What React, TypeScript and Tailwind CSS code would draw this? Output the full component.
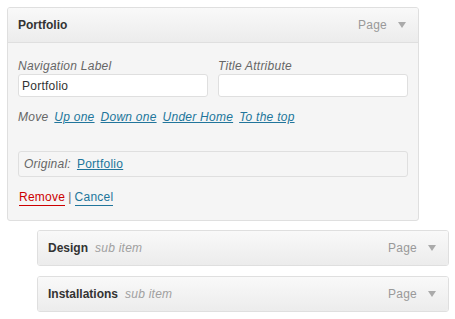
import React from 'react';

// -----------------------------------------------------------------------------
// Pieces
// -----------------------------------------------------------------------------

const Arrow: React.FC = () => (
  <svg width="8" height="6" viewBox="0 0 8 6" className="ml-[11px] shrink-0">
    <polygon points="0,0 8,0 4,6" fill="#aaaaaa" />
  </svg>
);

type HandleProps = {
  title: string;
  sub?: string;
  open?: boolean;
};

const ItemHandle: React.FC<HandleProps> = ({ title, sub, open }) => (
  <div
    className={
      open
        ? 'flex h-[35px] items-center border-b border-[#dfdfdf] bg-gradient-to-b from-[#f9f9f9] to-[#ececec] pl-[10px] pr-[12px]'
        : 'flex h-[34px] items-center bg-gradient-to-b from-[#f9f9f9] to-[#ececec] pl-[10px] pr-[12px]'
    }
  >
    <span className="font-bold tracking-normal text-[#333333]">{title}</span>
    {sub && <span className="ml-[7px] italic text-[#a0a0a0]">{sub}</span>}
    <span className="ml-auto text-[#999999]">Page</span>
    <Arrow />
  </div>
);

const MoveLink: React.FC<{ children: React.ReactNode }> = ({ children }) => (
  <a className="ml-[6px] text-[#21759b] underline underline-offset-[1px]" href="#">
    {children}
  </a>
);

// -----------------------------------------------------------------------------
// App
// -----------------------------------------------------------------------------

const App: React.FC = () => {
  return (
    <div className="min-h-[319px] bg-white pl-[7px] pt-[7px] font-['Liberation_Sans',Arial,sans-serif] text-[12px] leading-[16px] tracking-[0.25px]">
      {/* open item */}
      <div className="w-[412px] overflow-hidden rounded-[3px] border border-[#dfdfdf] bg-[#f5f5f5]">
        <ItemHandle title="Portfolio" open />
        <div className="px-[10px] pb-[14px] pt-[15px]">
          <div className="grid grid-cols-2 gap-x-[10px]">
            <label className="flex flex-col">
              <span className="italic text-[#666666]">Navigation Label</span>
              <input
                className="h-[23px] w-[190px] rounded-[3px] border border-[#dfdfdf] bg-white px-[3px] text-[12px] tracking-[0.25px] text-[#333333] outline-none"
                defaultValue="Portfolio"
              />
            </label>
            <label className="flex flex-col">
              <span className="italic text-[#666666]">Title Attribute</span>
              <input
                className="h-[23px] w-[190px] rounded-[3px] border border-[#dfdfdf] bg-white px-[3px] text-[12px] text-[#333333] outline-none"
                defaultValue=""
              />
            </label>
          </div>

          <div className="mt-[12px] italic text-[#666666]">
            Move
            <MoveLink>Up one</MoveLink>
            <MoveLink>Down one</MoveLink>
            <MoveLink>Under Home</MoveLink>
            <MoveLink>To the top</MoveLink>
          </div>

          <div className="mt-[26px] h-[26px] rounded-[3px] border border-[#dfdfdf] pl-[5px] pt-[4px]">
            <span className="italic text-[#666666]">Original:</span>
            <a className="ml-[6px] text-[#21759b] underline underline-offset-[1px]" href="#">
              Portfolio
            </a>
          </div>

          <div className="mt-[13px] flex items-start">
            <a className="ml-[1px] inline-block border-b border-[#cc0000] leading-[15px] text-[#cc0000]" href="#">
              Remove
            </a>
            <span className="mx-[3px] leading-[15px] text-[#666666]">|</span>
            <a className="inline-block border-b border-[#21759b] leading-[15px] text-[#21759b]" href="#">
              Cancel
            </a>
          </div>
        </div>
      </div>

      {/* sub items */}
      <div className="ml-[30px] mt-[9px] flex w-[412px] flex-col gap-[10px]">
        <div className="overflow-hidden rounded-[3px] border border-[#dfdfdf]">
          <ItemHandle title="Design" sub="sub item" />
        </div>
        <div className="overflow-hidden rounded-[3px] border border-[#dfdfdf]">
          <ItemHandle title="Installations" sub="sub item" />
        </div>
      </div>
    </div>
  );
};

export default App;
